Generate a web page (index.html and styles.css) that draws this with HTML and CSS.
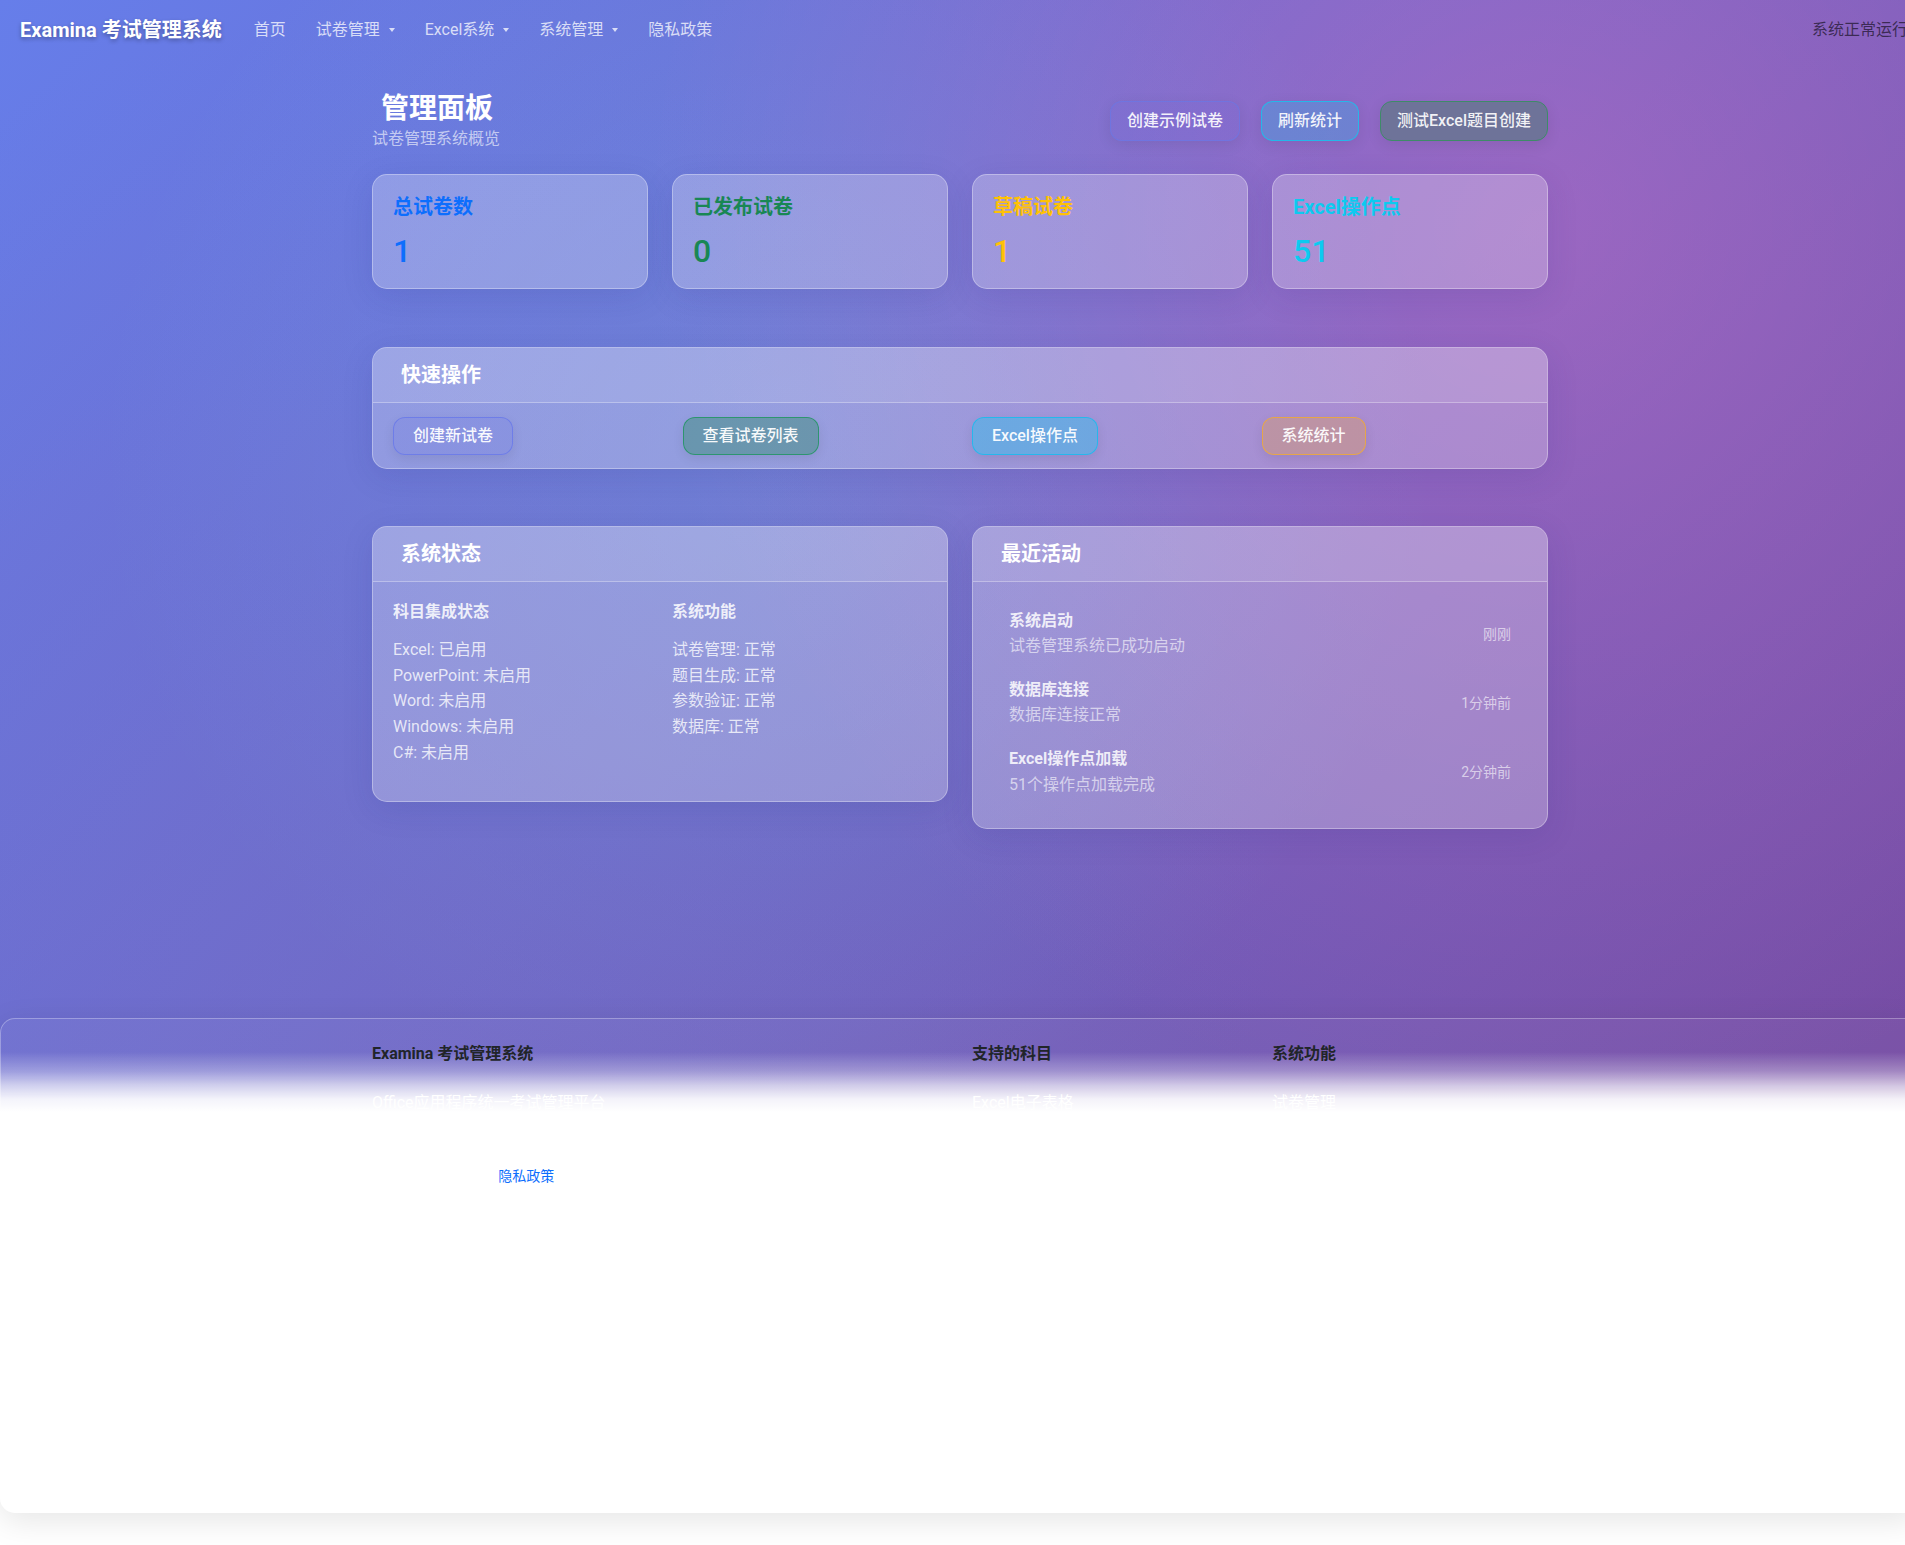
FILE: index.html
```html
<!DOCTYPE html>
<html lang="zh-CN">
<head>
<meta charset="utf-8">
<title>管理面板 - Examina 考试管理系统</title>
<link rel="stylesheet" href="styles.css">
</head>
<body>
<div class="page">
  <nav class="navbar">
    <a class="brand" href="#">Examina 考试管理系统</a>
    <ul class="nav">
      <li><a class="nav-link" href="#">首页</a></li>
      <li><a class="nav-link dropdown" href="#">试卷管理</a></li>
      <li><a class="nav-link dropdown" href="#">Excel系统</a></li>
      <li><a class="nav-link dropdown" href="#">系统管理</a></li>
      <li><a class="nav-link" href="#">隐私政策</a></li>
    </ul>
    <span class="nav-status">系统正常运行</span>
  </nav>

  <main class="container">
    <div class="page-header">
      <div>
        <h1 class="page-title">管理面板</h1>
        <p class="page-subtitle">试卷管理系统概览</p>
      </div>
      <div class="header-actions">
        <button class="btn btn-primary-glass">创建示例试卷</button>
        <button class="btn btn-info-glass">刷新统计</button>
        <button class="btn btn-test-glass">测试Excel题目创建</button>
      </div>
    </div>

    <div class="stats">
      <div class="glass stat-card">
        <h5 class="stat-title text-primary">总试卷数</h5>
        <div class="stat-value text-primary">1</div>
      </div>
      <div class="glass stat-card">
        <h5 class="stat-title text-success">已发布试卷</h5>
        <div class="stat-value text-success">0</div>
      </div>
      <div class="glass stat-card">
        <h5 class="stat-title text-warning">草稿试卷</h5>
        <div class="stat-value text-warning">1</div>
      </div>
      <div class="glass stat-card">
        <h5 class="stat-title text-info">Excel操作点</h5>
        <div class="stat-value text-info">51</div>
      </div>
    </div>

    <section class="glass card quick-card">
      <div class="card-header"><h5 class="card-title">快速操作</h5></div>
      <div class="card-body quick-body">
        <div class="quick-col"><button class="qbtn qbtn-primary">创建新试卷</button></div>
        <div class="quick-col"><button class="qbtn qbtn-success">查看试卷列表</button></div>
        <div class="quick-col"><button class="qbtn qbtn-info">Excel操作点</button></div>
        <div class="quick-col"><button class="qbtn qbtn-warning">系统统计</button></div>
      </div>
    </section>

    <div class="two-col">
      <section class="glass card">
        <div class="card-header"><h5 class="card-title">系统状态</h5></div>
        <div class="card-body status-body">
          <div>
            <h6 class="sub-title">科目集成状态</h6>
            <ul class="status-list">
              <li>Excel: 已启用</li>
              <li>PowerPoint: 未启用</li>
              <li>Word: 未启用</li>
              <li>Windows: 未启用</li>
              <li>C#: 未启用</li>
            </ul>
          </div>
          <div>
            <h6 class="sub-title">系统功能</h6>
            <ul class="status-list">
              <li>试卷管理: 正常</li>
              <li>题目生成: 正常</li>
              <li>参数验证: 正常</li>
              <li>数据库: 正常</li>
            </ul>
          </div>
        </div>
      </section>

      <section class="glass card">
        <div class="card-header"><h5 class="card-title">最近活动</h5></div>
        <div class="card-body activity-body">
          <div class="activity-item">
            <div>
              <h6 class="activity-title">系统启动</h6>
              <p class="activity-desc">试卷管理系统已成功启动</p>
            </div>
            <small class="activity-time">刚刚</small>
          </div>
          <div class="activity-item">
            <div>
              <h6 class="activity-title">数据库连接</h6>
              <p class="activity-desc">数据库连接正常</p>
            </div>
            <small class="activity-time">1分钟前</small>
          </div>
          <div class="activity-item">
            <div>
              <h6 class="activity-title">Excel操作点加载</h6>
              <p class="activity-desc">51个操作点加载完成</p>
            </div>
            <small class="activity-time">2分钟前</small>
          </div>
        </div>
      </section>
    </div>
  </main>

  <footer class="footer">
    <div class="footer-inner">
      <div class="footer-cols">
        <div>
          <h6 class="footer-title">Examina 考试管理系统</h6>
          <p class="footer-text">Office应用程序统一考试管理平台</p>
        </div>
        <div>
          <h6 class="footer-title">支持的科目</h6>
          <p class="footer-text">Excel电子表格</p>
        </div>
        <div>
          <h6 class="footer-title">系统功能</h6>
          <p class="footer-text">试卷管理</p>
        </div>
      </div>
      <div class="footer-bottom">
        <span class="copyright">© 2024 Examina.</span>
        <a class="footer-link" href="#">隐私政策</a>
      </div>
    </div>
  </footer>
</div>
</body>
</html>
```

FILE: styles.css
```css
* { box-sizing: border-box; }

html, body {
  margin: 0;
  padding: 0;
  background: #fff;
  overflow: hidden;
}

body {
  font-family: Roboto, "Noto Sans CJK SC", sans-serif;
  font-size: 16px;
  line-height: 1.5;
  color: #212529;
}

.page {
  width: 1920px;
  min-height: 1545px;
  background-color: #fff;
  background-image:
    linear-gradient(to bottom, rgba(255,255,255,0) 0, rgba(255,255,255,0) 1052px, rgba(255,255,255,0.3) 1071px, rgba(255,255,255,0.68) 1086px, rgba(255,255,255,0.92) 1099px, #fff 1112px),
    radial-gradient(circle at 20% 80%, rgba(120,119,198,0.3), transparent 50%),
    radial-gradient(circle at 80% 20%, rgba(255,119,198,0.3), transparent 50%),
    radial-gradient(circle at 40% 40%, rgba(120,219,255,0.2), transparent 50%),
    linear-gradient(135deg, #667eea 0%, #764ba2 100%);
  background-size: 100% 1130px;
  background-repeat: no-repeat;
}

/* ---------- navbar ---------- */
.navbar {
  display: flex;
  align-items: center;
  height: 59px;
  padding: 0 12px 0 20px;
}

.brand {
  font-size: 20px;
  font-weight: 700;
  line-height: 30px;
  color: #fff;
  text-decoration: none;
  margin-right: 17px;
  text-shadow: 0 2px 4px rgba(0,0,0,0.3);
}

.nav {
  display: flex;
  list-style: none;
  margin: 0;
  padding: 0;
}

.nav-link {
  display: block;
  padding: 0 15px;
  line-height: 24px;
  color: rgba(255,255,255,0.75);
  text-decoration: none;
}

.dropdown::after {
  content: "";
  display: inline-block;
  margin-left: 9px;
  vertical-align: 3px;
  border-top: 4px solid;
  border-left: 3.5px solid transparent;
  border-right: 3.5px solid transparent;
}

.nav-status {
  margin-left: auto;
  color: rgba(0,0,0,0.58);
  line-height: 24px;
}

/* ---------- main ---------- */
.container {
  width: 1176px;
  margin: 0 auto;
  padding-top: 33px;
}

.page-header {
  display: flex;
  justify-content: space-between;
  align-items: center;
  margin-bottom: 23px;
}

.page-title {
  margin: 0;
  padding-left: 9px;
  font-size: 28px;
  font-weight: 700;
  line-height: 1.2;
  color: #fff;
}

.page-subtitle {
  margin: 1px 0 0;
  line-height: 24px;
  color: rgba(255,255,255,0.62);
}

.header-actions {
  display: flex;
  gap: 21px;
}

.btn {
  font: inherit;
  font-size: 16px;
  font-weight: 500;
  line-height: 24px;
  padding: 7px 16px;
  border-radius: 12px;
  border: 1px solid transparent;
  color: rgba(255,255,255,0.92);
  background: transparent;
  box-shadow: 0 4px 15px rgba(0,0,0,0.08);
}

.btn-primary-glass {
  background: rgba(102,110,234,0.12);
  border-color: rgba(102,120,234,0.6);
}

.btn-info-glass {
  background: rgba(13,202,240,0.25);
  border-color: rgba(13,202,240,0.75);
}

.btn-test-glass {
  background: #6e7399;
  border-color: #3e8b68;
}

/* ---------- glass cards ---------- */
.glass {
  background: rgba(255,255,255,0.25);
  border: 1px solid rgba(255,255,255,0.32);
  border-radius: 15px;
  box-shadow: 0 8px 32px rgba(31,38,135,0.12);
}

.stats {
  display: grid;
  grid-template-columns: repeat(4, 1fr);
  gap: 24px;
}

.stat-card {
  padding: 20px 20px 18px;
}

.stat-title {
  margin: 0 0 13px;
  font-size: 20px;
  font-weight: 700;
  line-height: 24px;
}

.stat-value {
  font-size: 32px;
  font-weight: 500;
  line-height: 1.2;
}

.text-primary { color: #0d6efd; }
.text-success { color: #198754; }
.text-warning { color: #ffc107; }
.text-info { color: #0dcaf0; }

.card {
  overflow: hidden;
}

.quick-card {
  margin-top: 58px;
}

.card-header {
  padding: 15px 28px;
  background: rgba(255,255,255,0.1);
  border-bottom: 1px solid rgba(255,255,255,0.3);
}

.card-title {
  margin: 0;
  font-size: 20px;
  font-weight: 700;
  line-height: 24px;
  color: #fff;
}

.card-body {
  padding: 20px;
}

.quick-body {
  display: grid;
  grid-template-columns: repeat(4, 1fr);
  column-gap: 24px;
  padding: 14px 20px 13px;
}

.qbtn {
  font: inherit;
  font-size: 16px;
  font-weight: 500;
  line-height: 24px;
  padding: 6px 19px;
  border-radius: 12px;
  border: 1px solid transparent;
  color: rgba(255,255,255,0.95);
  box-shadow: 0 4px 12px rgba(0,0,0,0.08);
}

.qbtn-primary {
  background: rgba(102,110,230,0.18);
  border-color: rgba(102,118,234,0.75);
}

.qbtn-success {
  background: rgba(25,135,84,0.35);
  border-color: rgba(25,150,90,0.75);
}

.qbtn-info {
  background: rgba(13,202,240,0.34);
  border-color: rgba(13,190,240,0.75);
}

.qbtn-warning {
  background: rgba(235,160,60,0.3);
  border-color: rgba(240,170,50,0.8);
}

.two-col {
  display: grid;
  grid-template-columns: 1fr 1fr;
  gap: 24px;
  align-items: start;
  margin-top: 57px;
}

.status-body {
  display: grid;
  grid-template-columns: 1fr 1fr;
  column-gap: 24px;
}

.sub-title {
  margin: 0 0 16px;
  font-size: 16px;
  font-weight: 700;
  line-height: 19.2px;
  color: rgba(255,255,255,0.85);
}

.status-list {
  list-style: none;
  margin: 0 0 16px;
  padding: 0;
}

.status-list li {
  line-height: 25.6px;
  color: rgba(255,255,255,0.78);
}

.activity-body {
  padding-top: 18px;
}

.activity-item {
  display: flex;
  justify-content: space-between;
  align-items: center;
  padding: 11px 16px;
}

.activity-title {
  margin: 0 0 4px;
  font-size: 16px;
  font-weight: 700;
  line-height: 19.2px;
  color: rgba(255,255,255,0.85);
}

.activity-desc {
  margin: 0;
  line-height: 24px;
  color: rgba(255,255,255,0.6);
}

.activity-time {
  font-size: 14px;
  color: rgba(255,255,255,0.6);
}

/* ---------- footer ---------- */
.footer {
  width: 1920px;
  height: 495px;
  margin-top: 189px;
  padding-top: 25px;
  border: 1px solid rgba(255,255,255,0.3);
  border-radius: 15px;
  background: rgba(255,255,255,0.04);
  box-shadow: 0 8px 32px rgba(0,0,0,0.1);
}

.footer-inner {
  width: 1176px;
  margin: 0 auto;
}

.footer-cols {
  display: grid;
  grid-template-columns: 576px 276px 276px;
  column-gap: 24px;
}

.footer-title {
  margin: 0 0 28px;
  font-size: 16px;
  font-weight: 700;
  line-height: 19.2px;
  color: #212529;
}

.footer-text {
  margin: 0;
  line-height: 24px;
  color: #fff;
}

.footer-bottom {
  margin-top: 51px;
  font-size: 14px;
  line-height: 21px;
  color: #fff;
}

.footer-link {
  margin-left: 16px;
  color: #0d6efd;
  text-decoration: none;
}
```
